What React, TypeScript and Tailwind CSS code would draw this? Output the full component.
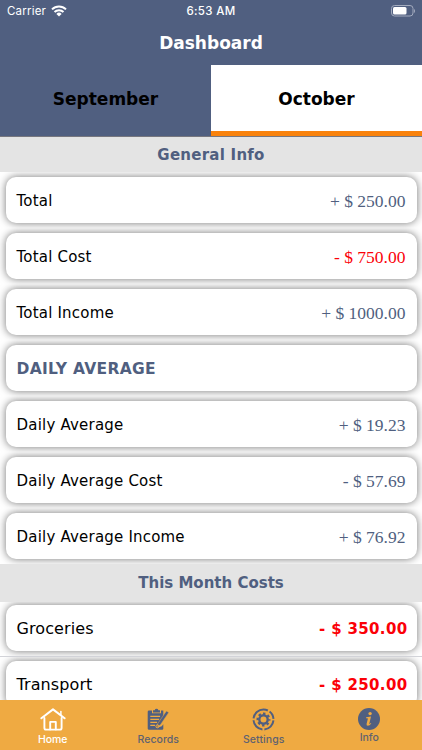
import React, { useState } from 'react';

interface InfoItem {
  label: string;
  value?: string;
  negative?: boolean;
}

const months = ['September', 'October'];

const generalInfo: InfoItem[] = [
  { label: 'Total', value: '+ $ 250.00' },
  { label: 'Total Cost', value: '- $ 750.00', negative: true },
  { label: 'Total Income', value: '+ $ 1000.00' },
  { label: 'DAILY AVERAGE' },
  { label: 'Daily Average', value: '+ $ 19.23' },
  { label: 'Daily Average Cost', value: '- $ 57.69' },
  { label: 'Daily Average Income', value: '+ $ 76.92' },
];

const costs = [
  { label: 'Groceries', value: '- $ 350.00' },
  { label: 'Transport', value: '- $ 250.00' },
];

const HomeIcon = () => (
  <svg width="26" height="23" viewBox="0 0 26 23" fill="none" stroke="currentColor" strokeWidth="1.9" strokeLinejoin="round" strokeLinecap="round">
    <path d="M1.4 10.3 13 1.4l11.6 8.9" strokeWidth="2" />
    <path d="M20.9 3.6v3.6" strokeWidth="1.5" />
    <path d="M4.4 10v10q0 1.6 1.6 1.6h14q1.6 0 1.6-1.6V10" />
    <path d="M10.2 21.4v-7.5h5.6v7.5" />
  </svg>
);

const RecordsIcon = () => (
  <svg width="22" height="23" viewBox="0 0 22 23" fill="none">
    <path fill="currentColor" d="M2 2.5h3v2.8h9V2.5h2.3v7.2l-4.7 6.1-.5 3.6 3.6-1.2 1.6-2v4.3q0 1.2-1.2 1.2H2q-1.3 0-1.3-1.2V3.7Q.7 2.5 2 2.5z" />
    <path fill="currentColor" d="M6 4.4V2.2h1.7a1.9 1.9 0 0 1 3.7 0H13v2.2z" />
    <path stroke="#efaa42" strokeWidth="1.1" d="M3.3 8.4h9.8M3.3 11.4h8.8M3.3 14.4h6.8M3.3 17.4h4.7" />
    <path fill="currentColor" stroke="#efaa42" strokeWidth=".5" d="m19.4 3 2.4 1.4-8.3 12.3-3.6 2.6.9-3.8z" />
    <circle cx="10.4" cy="18.3" r="1.5" stroke="#efaa42" strokeWidth="1" />
  </svg>
);

const SettingsIcon = () => (
  <svg width="23" height="23" viewBox="0 0 23 23" fill="none" stroke="currentColor">
    <circle cx="11.5" cy="11.5" r="10" strokeWidth="2" strokeDasharray="13.7 2 13.7 2 18.9 2 8.5 2.03" strokeDashoffset="-1" />
    <circle cx="11.5" cy="11.5" r="4.2" strokeWidth="2.4" />
    <circle cx="11.5" cy="11.5" r="5.9" strokeWidth="2.2" strokeDasharray="2.4 2.234" strokeDashoffset="1.2" />
  </svg>
);

const InfoIcon = () => (
  <svg width="22" height="22" viewBox="0 0 22 22">
    <circle cx="11" cy="11" r="11" fill="currentColor" />
    <circle cx="12.1" cy="5.6" r="1.7" fill="#efaa42" />
    <path fill="#efaa42" d="m8.2 9.3 4.8-.7-1.6 6.6q-.2 1 .4.7l1-.9.5.5q-1.8 2.2-3.5 2.2-1.6 0-1.2-2l1.2-4.6q.2-.9-.5-.9H8z" />
  </svg>
);

const tabs = [
  { label: 'Home', Icon: HomeIcon, labelClass: 'leading-[17px] tracking-[-0.1px]' },
  { label: 'Records', Icon: RecordsIcon, labelClass: 'leading-[17px] tracking-[0.05px] text-[#5f6270]' },
  { label: 'Settings', Icon: SettingsIcon, labelClass: 'leading-[17px] tracking-[0.1px] text-[#5f6270]' },
  { label: 'Info', Icon: InfoIcon, labelClass: 'leading-[15px] text-[#5f6270]' },
];

const StatusBar = () => (
  <div className="grid h-[22px] grid-cols-3 items-center px-[7px] font-['Inter',sans-serif] text-[11.5px] text-white">
    <div className="flex items-center gap-[5px]">
      <span className="pt-px tracking-[0.2px]">Carrier</span>
      <svg width="16" height="12" viewBox="0 0 16 12" fill="none" stroke="currentColor" strokeWidth="2">
        <path d="M1 4.4a10 10 0 0 1 14 0" />
        <path d="M3.5 7a6.4 6.4 0 0 1 9 0" />
        <path d="M8 11.5 5.4 8.9a3.7 3.7 0 0 1 5.2 0z" fill="currentColor" stroke="none" />
      </svg>
    </div>
    <span className="pt-px text-center font-medium tracking-[0.35px]">6:53 AM</span>
    <svg className="justify-self-end" width="25" height="12" viewBox="0 0 25 12">
      <rect x="1.5" y=".5" width="21.5" height="10.5" rx="3" fill="none" stroke="#a3abbe" />
      <rect x="3" y="2" width="13.5" height="7.5" rx="1.5" fill="white" />
      <path d="M24 4v4q1-.6 1-2t-1-2z" fill="#a3abbe" />
    </svg>
  </div>
);

const Card = ({ children }: { children: React.ReactNode }) => (
  <div className="flex h-[46px] items-center justify-between rounded-[10px] bg-white px-[11px] pt-[2px] shadow-[0_0_9px_rgba(0,0,0,0.55)]">
    {children}
  </div>
);

const App = () => {
  const [month, setMonth] = useState('October');
  const [activeTab, setActiveTab] = useState('Home');

  return (
    <div className="flex h-[750px] w-[422px] flex-col overflow-hidden bg-white font-['DejaVu_Sans',sans-serif]">
      <header className="h-[65px] shrink-0 bg-[#505f80]">
        <StatusBar />
        <h1 className="pt-[9px] text-center text-[17px] leading-6 font-bold text-white">Dashboard</h1>
      </header>

      <div className="flex h-[72px] shrink-0 border-b border-[#77777f] bg-[#505f80]">
        {months.map(m => (
          <button
            key={m}
            onClick={() => setMonth(m)}
            className={`flex-1 border-b-[5px] pt-[4px] text-[17px] font-bold text-black ${
              m === month ? 'border-[#f9820c] bg-white' : 'border-transparent'
            }`}
          >
            {m}
          </button>
        ))}
      </div>

      <main className="min-h-0 flex-1 overflow-hidden">
        <h2 className="h-[35px] bg-[#e4e4e4] text-center text-[15px] leading-[37px] font-bold tracking-[0.25px] text-[#505f80]">General Info</h2>
        {generalInfo.map(item => (
          <div key={item.label} className="h-14 overflow-hidden px-[5.5px] py-[5px]">
            <Card>
              {item.value ? (
                <>
                  <span className="text-[15px] tracking-[0.2px] text-black">{item.label}</span>
                  <span className={`font-['Liberation_Serif',serif] text-[17.5px] ${item.negative ? 'text-[#fb0007]' : 'text-[#505f80]'}`}>
                    {item.value}
                  </span>
                </>
              ) : (
                <span className="pt-px text-[15.5px] font-bold tracking-[0.3px] text-[#505f80]">{item.label}</span>
              )}
            </Card>
          </div>
        ))}

        <h2 className="h-[38px] bg-[#e4e4e4] text-center text-[15px] leading-[39px] font-bold text-[#505f80]">This Month Costs</h2>
        {costs.map((item, i) => (
          <div key={item.label} className={`overflow-hidden border-b border-[#d2d3d8] px-[5.5px] pb-[5px] ${i === 0 ? 'pt-[3px]' : 'pt-1'}`}>
            <Card>
              <span className="text-[16px] tracking-[0.1px] text-black">{item.label}</span>
              <span className="-mr-[2px] text-[15px] font-bold tracking-[0.35px] text-[#fb0007]">{item.value}</span>
            </Card>
          </div>
        ))}
      </main>

      <nav className="grid h-[50px] shrink-0 grid-cols-4 bg-[#efaa42] font-['Inter',sans-serif] text-[10.5px] font-medium">
        {tabs.map(({ label, Icon, labelClass }) => (
          <button
            key={label}
            onClick={() => setActiveTab(label)}
            className={`flex flex-col items-center pt-2 ${label === activeTab ? 'text-white' : 'text-[#505f80]'}`}
          >
            <Icon />
            <span className={labelClass}>{label}</span>
          </button>
        ))}
      </nav>
    </div>
  );
};

export default App;
